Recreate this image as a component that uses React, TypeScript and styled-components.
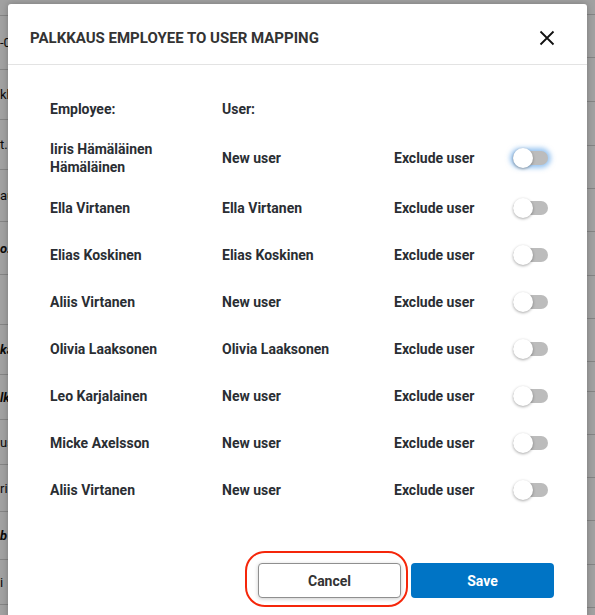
import styled, { createGlobalStyle } from 'styled-components';

const employees = [
    { name: 'Iiris Hämäläinen Hämäläinen', user: 'New user', focused: true },
    { name: 'Ella Virtanen', user: 'Ella Virtanen' },
    { name: 'Elias Koskinen', user: 'Elias Koskinen' },
    { name: 'Aliis Virtanen', user: 'New user' },
    { name: 'Olivia Laaksonen', user: 'Olivia Laaksonen' },
    { name: 'Leo Karjalainen', user: 'New user' },
    { name: 'Micke Axelsson', user: 'New user' },
    { name: 'Aliis Virtanen', user: 'New user' },
];

// rows of the page that sits behind the dialog
const bgRows = [
    { text: '', h: 16 },
    { text: '-0', h: 54 },
    { text: 'kk', h: 50 },
    { text: 't.', h: 50 },
    { text: 'au', h: 52 },
    { text: 'o.', h: 53, italic: true },
    { text: '', h: 50 },
    { text: 'ka', h: 50, italic: true },
    { text: 'lk', h: 45, italic: true },
    { text: 'us', h: 45 },
    { text: 'ri', h: 47 },
    { text: 'b', h: 48, italic: true },
    { text: 'i', h: 45 },
];

const sideRows = [15, 43, 44, 44, 43, 43, 44, 43, 43, 30, 43, 43, 43, 44, 43];

const App = () => {
    return (
        <Page>
            <GlobalStyle />
            <Background>
                <BgTable>
                    {bgRows.map((row, i) => (
                        <BgRow key={i} style={{ height: row.h }}>
                            <BgText $italic={!!row.italic}>{row.text}</BgText>
                        </BgRow>
                    ))}
                </BgTable>
                <BgSide>
                    {sideRows.map((h, i) => (
                        <BgRow key={i} style={{ height: h }} />
                    ))}
                </BgSide>
            </Background>
            <Overlay />
            <Modal>
                <Header>
                    <Title>Palkkaus employee to user mapping</Title>
                    <CloseButton aria-label="Close">
                        <svg width="16" height="16" viewBox="0 0 16 16">
                            <path
                                d="M1.5 1.5 L14.5 14.5 M14.5 1.5 L1.5 14.5"
                                stroke="#111"
                                strokeWidth="1.8"
                                fill="none"
                            />
                        </svg>
                    </CloseButton>
                </Header>
                <Body>
                    <MappingRow>
                        <Cell>Employee:</Cell>
                        <Cell>User:</Cell>
                        <Cell />
                        <Cell />
                    </MappingRow>
                    {employees.map((e, i) => (
                        <MappingRow key={i}>
                            <Cell>{e.name}</Cell>
                            <Cell>{e.user}</Cell>
                            <Cell>Exclude user</Cell>
                            <Cell>
                                <Toggle $focused={!!e.focused}>
                                    <Knob />
                                </Toggle>
                            </Cell>
                        </MappingRow>
                    ))}
                </Body>
                <Footer>
                    <CancelButton>Cancel</CancelButton>
                    <SaveButton>Save</SaveButton>
                </Footer>
            </Modal>
        </Page>
    );
};

interface ItalicProps {
    $italic: boolean;
}

interface ToggleProps {
    $focused: boolean;
}

const GlobalStyle = createGlobalStyle`
    html, body {
        margin: 0;
        padding: 0;
        overflow: hidden;
        background: #ffffff;
    }
    * {
        box-sizing: border-box;
    }
`;

const Page = styled.div`
    position: relative;
    width: 595px;
    height: 615px;
    overflow: hidden;
    font-family: Roboto, 'Liberation Sans', Arial, sans-serif;
`;

const Background = styled.div`
    display: flex;
    justify-content: space-between;
    height: 100%;
    background: #ffffff;
`;

const BgTable = styled.div`
    display: flex;
    flex-direction: column;
    width: 300px;
`;

const BgSide = styled.div`
    display: flex;
    flex-direction: column;
    width: 20px;
`;

const BgRow = styled.div`
    display: flex;
    align-items: center;
    border-bottom: 1px solid #d2d2d2;
`;

const BgText = styled.span<ItalicProps>`
    font-size: 13px;
    color: #111;
    font-style: ${(props) => (props.$italic ? 'italic' : 'normal')};
    font-weight: ${(props) => (props.$italic ? 'bold' : 'normal')};
`;

const Overlay = styled.div`
    position: absolute;
    inset: 0;
    background: rgba(0, 0, 0, 0.37);
`;

const Modal = styled.div`
    position: absolute;
    top: 4px;
    left: 8px;
    width: 579px;
    bottom: -40px;
    background: #ffffff;
    border-radius: 3px;
    box-shadow: 0 0 6px rgba(0, 0, 0, 0.25);
    display: flex;
    flex-direction: column;
`;

const Header = styled.div`
    display: flex;
    align-items: center;
    justify-content: space-between;
    padding: 24px 30px 16px 22px;
    border-bottom: 1px solid #e3e3e3;
`;

const Title = styled.div`
    font-size: 15px;
    line-height: 20px;
    font-weight: bold;
    text-transform: uppercase;
    color: #333333;
`;

const CloseButton = styled.button`
    display: flex;
    align-items: center;
    justify-content: center;
    width: 20px;
    height: 20px;
    padding: 0;
    border: none;
    background: none;
`;

const Body = styled.div`
    display: flex;
    flex-direction: column;
    padding: 20px 39px 0 42px;
`;

const MappingRow = styled.div`
    display: grid;
    grid-template-columns: 172px 172px 119px 36px;
    align-items: center;
    min-height: 47px;
    padding: 8px 0;
`;

const Cell = styled.div`
    font-size: 14px;
    line-height: 18px;
    font-weight: bold;
    color: #2a2e33;
    padding-right: 12px;
`;

const Toggle = styled.div<ToggleProps>`
    position: relative;
    width: 35px;
    height: 14px;
    border-radius: 7px;
    background: #bcbcbc;
    box-shadow: ${(props) =>
        props.$focused ? '0 0 5px 3px rgba(70, 150, 230, 0.55)' : 'none'};
`;

const Knob = styled.div`
    position: absolute;
    left: 0;
    top: -3px;
    width: 20px;
    height: 20px;
    border-radius: 50%;
    background: #ffffff;
    box-shadow: 0 1px 3px rgba(0, 0, 0, 0.35);
`;

const Footer = styled.div`
    display: flex;
    justify-content: flex-end;
    gap: 10px;
    padding: 50px 33px 0 0;
`;

const BaseButton = styled.button`
    width: 143px;
    height: 35px;
    border-radius: 4px;
    font-family: Roboto, 'Liberation Sans', Arial, sans-serif;
    font-size: 14px;
    font-weight: bold;
`;

const CancelButton = styled(BaseButton)`
    position: relative;
    background: #ffffff;
    color: #333333;
    border: 1px solid #8f8f8f;
    box-shadow: 0 1px 4px rgba(0, 0, 0, 0.2);

    &::after {
        content: '';
        position: absolute;
        left: -14px;
        right: -8px;
        top: -13px;
        bottom: -10px;
        border: 2px solid #f5260a;
        border-radius: 20px;
    }
`;

const SaveButton = styled(BaseButton)`
    background: #0074c5;
    color: #ffffff;
    border: none;
`;

export default App;
